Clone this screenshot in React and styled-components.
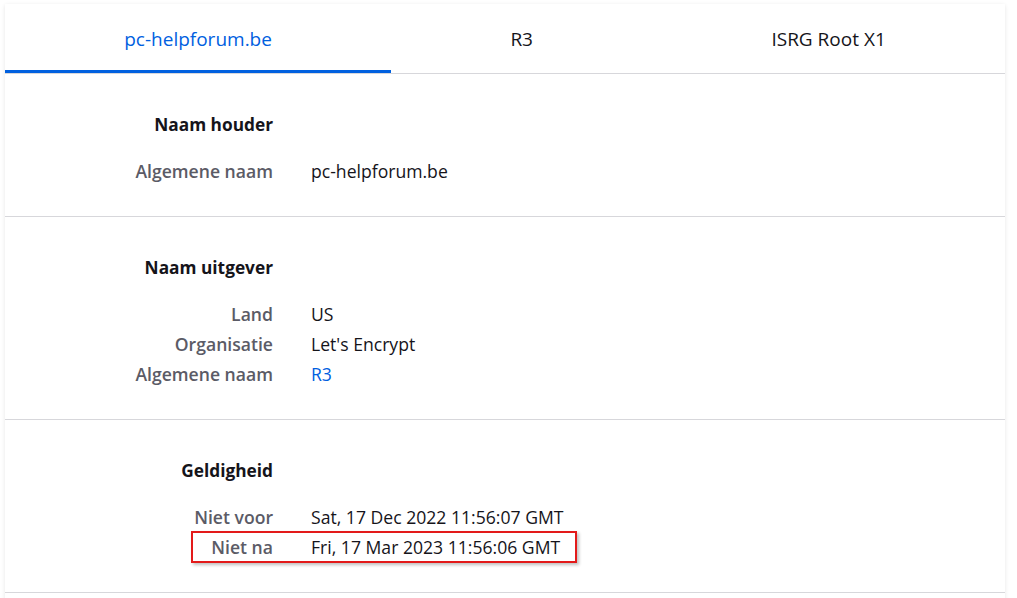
import React from "react";
import styled, { createGlobalStyle } from "styled-components";

const GlobalStyle = createGlobalStyle`
  html, body {
    margin: 0;
    padding: 0;
    background: #ffffff;
    overflow: hidden;
  }
  body {
    font-family: "Open Sans", "Noto Sans", sans-serif;
    color: #15141a;
  }
`;

const Page = styled.div`
  padding: 4px 12px 0 5px;
  height: 598px;
  box-sizing: border-box;
`;

const Card = styled.div`
  background: #fff;
  box-shadow: 0 1px 4px rgba(12, 12, 13, 0.1);
  min-height: 620px;
`;

const Tabs = styled.div`
  display: flex;
  border-bottom: 1px solid #d7d7db;
`;

const Tab = styled.div`
  flex: 1 1 auto;
  height: 69px;
  display: flex;
  align-items: center;
  justify-content: center;
  font-size: 19px;
  padding-top: 4px;
  box-sizing: border-box;
  color: ${(p) => (p.active ? "#0060df" : "#15141a")};
  border-bottom: 3px solid ${(p) => (p.active ? "#0060df" : "transparent")};
`;

const Section = styled.section`
  border-bottom: 1px solid #d7d7db;
  padding: 40px 0 30px;
`;

const Grid = styled.div`
  display: grid;
  grid-template-columns: 268px 1fr;
  column-gap: 38px;
  font-size: 17.6px;
  line-height: 22px;
`;

const Heading = styled.div`
  grid-column: 1;
  text-align: right;
  font-weight: 700;
  font-size: 17.3px;
  color: #15141a;
  margin-bottom: 20px;
`;

const RowWrap = styled.div`
  grid-column: 1 / -1;
  display: grid;
  grid-template-columns: 268px 1fr;
  column-gap: 38px;
  position: relative;
  padding: 4px 0;
`;

const Label = styled.div`
  text-align: right;
  font-weight: 600;
  color: #5b5b66;
`;

const Value = styled.div`
  color: ${(p) => (p.link ? "#0060df" : "#15141a")};
`;

const Highlight = styled.div`
  position: absolute;
  left: 186px;
  top: -1px;
  width: 386px;
  height: 32px;
  border: 2px solid #e31a1a;
  box-sizing: border-box;
  box-shadow: 2px 2px 3px rgba(0, 0, 0, 0.25);
  pointer-events: none;
`;

const sections = [
  {
    title: "Naam houder",
    rows: [["Algemene naam", "pc-helpforum.be"]],
  },
  {
    title: "Naam uitgever",
    rows: [
      ["Land", "US"],
      ["Organisatie", "Let's Encrypt"],
      ["Algemene naam", "R3", true],
    ],
  },
  {
    title: "Geldigheid",
    rows: [
      ["Niet voor", "Sat, 17 Dec 2022 11:56:07 GMT"],
      ["Niet na", "Fri, 17 Mar 2023 11:56:06 GMT", false, true],
    ],
  },
];

export default function App() {
  return (
    <Page>
      <GlobalStyle />
      <Card>
        <Tabs>
          <Tab active>pc-helpforum.be</Tab>
          <Tab>R3</Tab>
          <Tab>ISRG Root X1</Tab>
        </Tabs>
        {sections.map((s) => (
          <Section key={s.title}>
            <Grid>
              <Heading>{s.title}</Heading>
              {s.rows.map(([label, value, link, marked]) => (
                <RowWrap key={label}>
                  <Label>{label}</Label>
                  <Value link={link}>{value}</Value>
                  {marked && <Highlight />}
                </RowWrap>
              ))}
            </Grid>
          </Section>
        ))}
      </Card>
    </Page>
  );
}
